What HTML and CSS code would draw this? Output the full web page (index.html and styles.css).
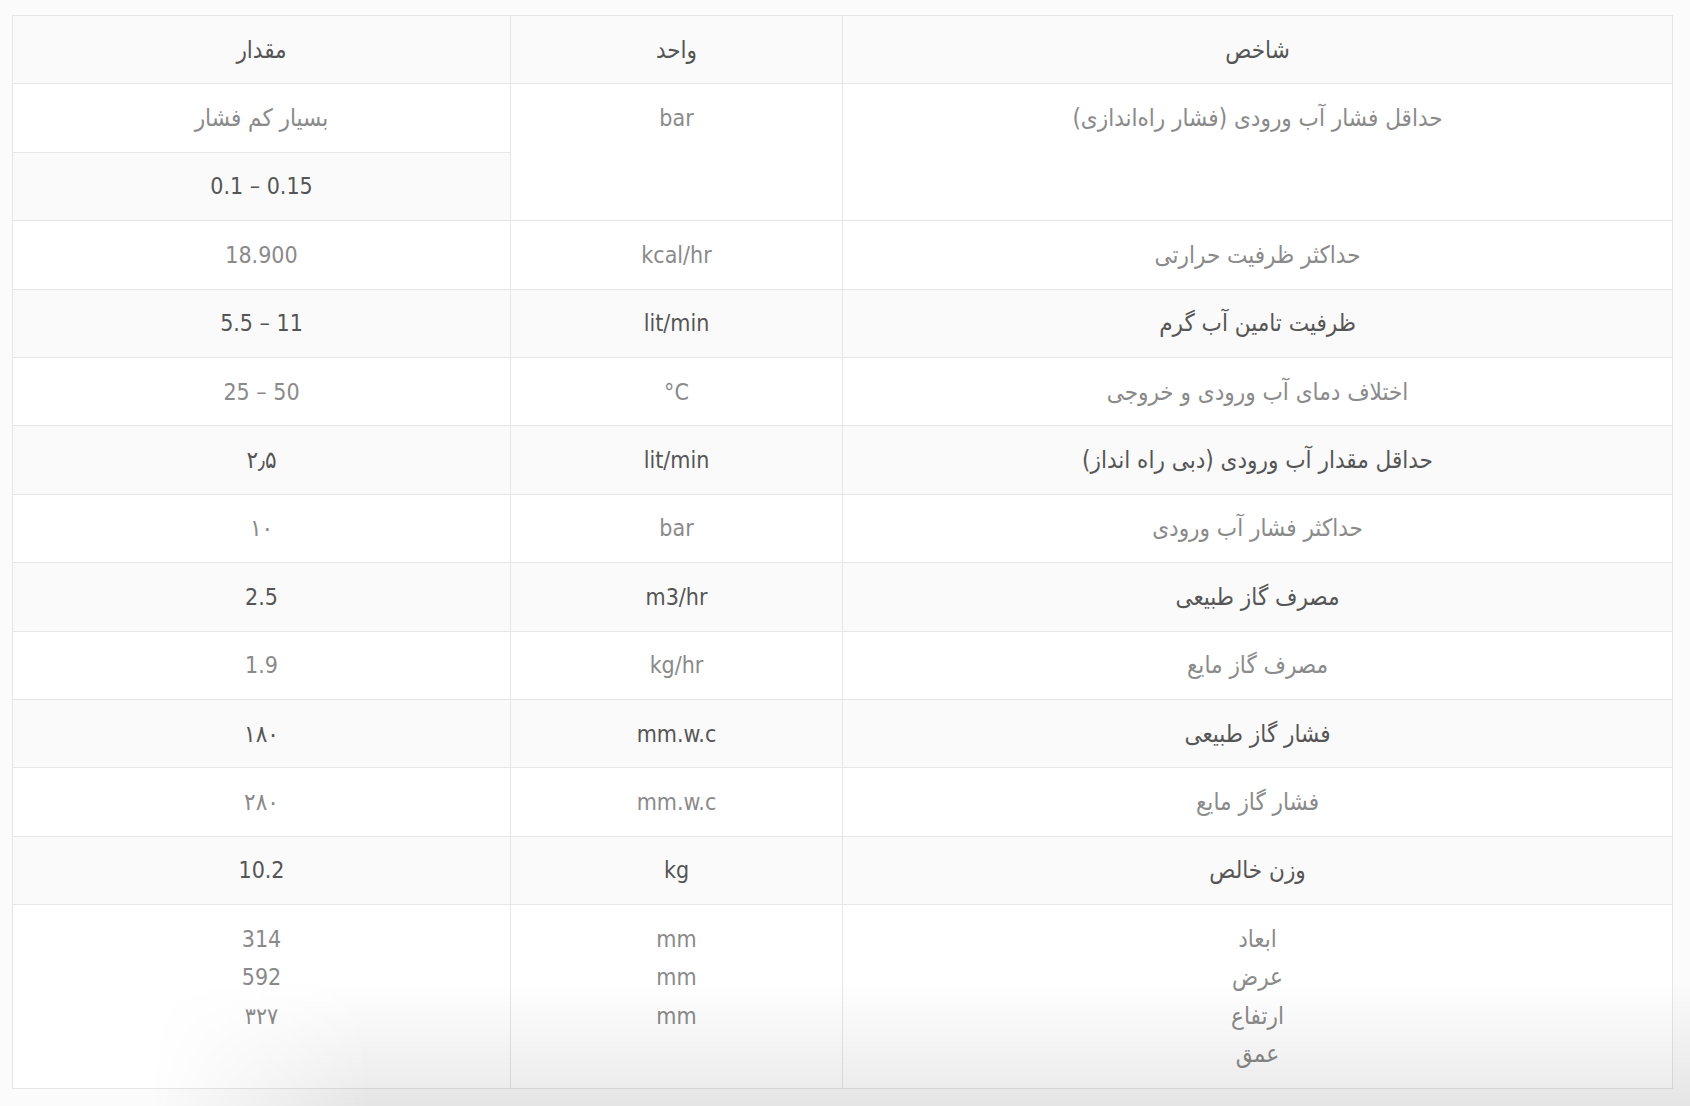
FILE: index.html
```html
<!DOCTYPE html>
<html lang="fa" dir="rtl">
<head>
<meta charset="utf-8">
<title>مشخصات فنی</title>
<link rel="stylesheet" href="styles.css">
</head>
<body>
<div class="frame">
  <table class="spec">
    <colgroup>
      <col class="c-name">
      <col class="c-unit">
      <col class="c-val">
    </colgroup>
    <thead>
      <tr><th>شاخص</th><th>واحد</th><th>مقدار</th></tr>
    </thead>
    <tbody>
      <tr><td rowspan="2">حداقل فشار آب ورودی (فشار راه‌اندازی)</td><td rowspan="2" class="en">bar</td><td>بسیار کم فشار</td></tr>
      <tr><td class="en">0.1 – 0.15</td></tr>
      <tr><td>حداکثر ظرفیت حرارتی</td><td class="en">kcal/hr</td><td class="en">18.900</td></tr>
      <tr><td>ظرفیت تامین آب گرم</td><td class="en">lit/min</td><td class="en">5.5 – 11</td></tr>
      <tr><td>اختلاف دمای آب ورودی و خروجی</td><td class="en">°C</td><td class="en">25 – 50</td></tr>
      <tr><td>حداقل مقدار آب ورودی (دبی راه انداز)</td><td class="en">lit/min</td><td>۲٫۵</td></tr>
      <tr><td>حداکثر فشار آب ورودی</td><td class="en">bar</td><td>۱۰</td></tr>
      <tr><td>مصرف گاز طبیعی</td><td class="en">m3/hr</td><td class="en">2.5</td></tr>
      <tr><td>مصرف گاز مایع</td><td class="en">kg/hr</td><td class="en">1.9</td></tr>
      <tr><td>فشار گاز طبیعی</td><td class="en">mm.w.c</td><td>۱۸۰</td></tr>
      <tr><td>فشار گاز مایع</td><td class="en">mm.w.c</td><td>۲۸۰</td></tr>
      <tr><td>وزن خالص</td><td class="en">kg</td><td class="en">10.2</td></tr>
      <tr><td>ابعاد<br>عرض<br>ارتفاع<br>عمق</td><td class="en">mm<br>mm<br>mm</td><td class="en">314<br>592<br>۳۲۷</td></tr>
    </tbody>
  </table>
  <div class="fade"></div>
</div>
</body>
</html>
```
FILE: styles.css
```css
html, body {
  margin: 0;
  padding: 0;
  background: #fbfbfb;
}
body {
  font-family: "DejaVu Sans Condensed", "DejaVu Sans", sans-serif;
  height: 1106px;
  overflow: hidden;
  position: relative;
}
.frame {
  padding: 15px 17px 0 12px;
}
.spec {
  width: 100%;
  border-collapse: collapse;
  background: #fff;
  table-layout: fixed;
  font-size: 24px;
  line-height: 38.4px;
  text-align: center;
}
.c-name { width: 50%; }
.c-unit { width: 20%; }
.c-val { width: 30%; }
.spec th,
.spec td {
  border: 1px solid #e6e6e6;
  padding: 14.5px 10px;
  vertical-align: top;
  color: #8a8a8a;
  font-weight: normal;
}
.spec td.en {
  direction: ltr;
  font-size: 23px;
}
.spec thead tr,
.spec tbody tr:nth-child(even) {
  background: #fafafa;
}
.spec th,
.spec tbody tr:nth-child(even) td {
  color: #555;
}
.fade {
  position: absolute;
  left: 150px;
  right: 0;
  bottom: 0;
  height: 125px;
  background: linear-gradient(to bottom, rgba(0,0,0,0), rgba(0,0,0,0.085));
  -webkit-mask-image: linear-gradient(to right, transparent, #000 220px);
  mask-image: linear-gradient(to right, transparent, #000 220px);
  pointer-events: none;
}
```
